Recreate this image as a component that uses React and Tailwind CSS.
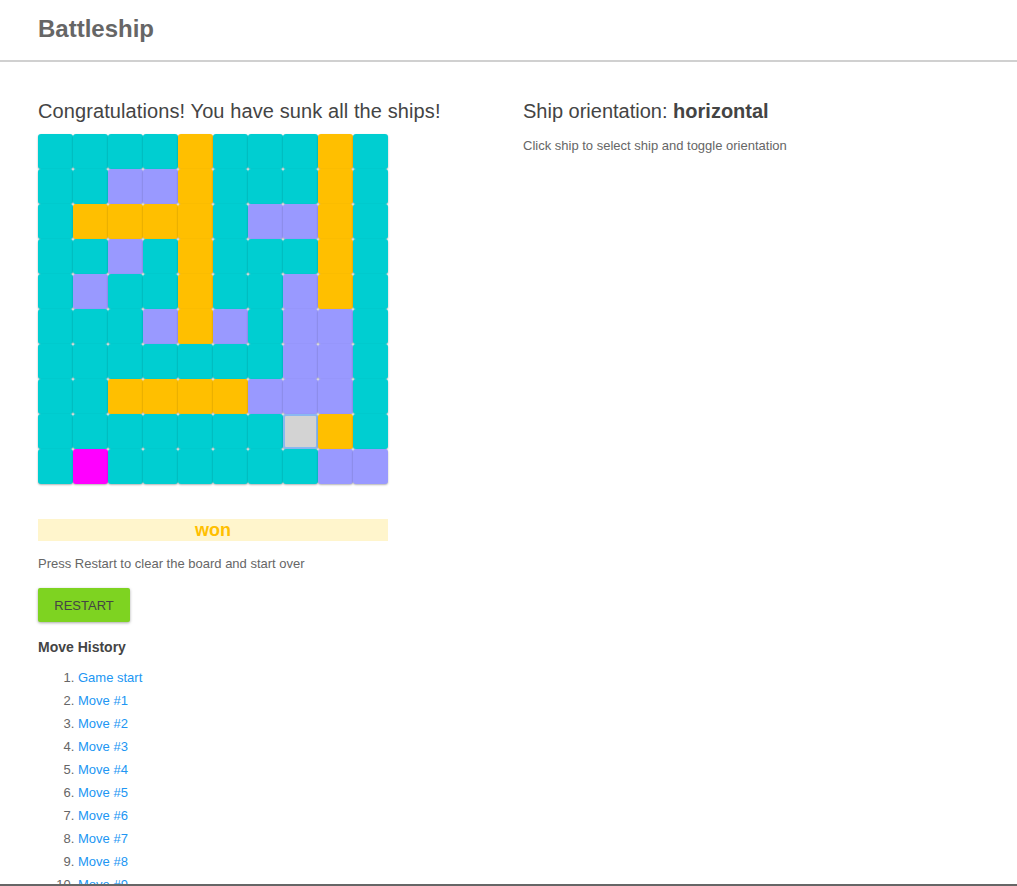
import React from 'react';

// board colors: C = water, Y = sunk ship, P = hit, M = last shot, G = selected
const BOARD = [
  'CCCCYCCCYC',
  'CCPPYCCCYC',
  'CYYYYCPPYC',
  'CCPCYCCCYC',
  'CPCCYCCPYC',
  'CCCPYPCPPC',
  'CCCCCCCPPC',
  'CCYYYYPPPC',
  'CCCCCCCGYC',
  'CMCCCCCCPP',
];

const cellClass = {
  C: 'bg-[#00ced1]',
  Y: 'bg-[#ffbf00]',
  P: 'bg-[#9999ff]',
  M: 'bg-[#ff00ff]',
  G: 'bg-[#d3d3d3] border-2 border-[#8ab8f0]',
};

const moves = ['Game start', 'Move #1', 'Move #2', 'Move #3', 'Move #4', 'Move #5', 'Move #6', 'Move #7', 'Move #8', 'Move #9', 'Move #10'];

const App = () => {
  return (
    <div className="min-h-screen bg-white text-[#444]" style={{ fontFamily: '"Liberation Sans", Arial, sans-serif' }}>
      <header className="h-[62px] border-b-2 border-[#d0d0d0] px-[38px] pt-[14px]">
        <h1 className="text-[24px] font-bold text-[#666] leading-[30px]">Battleship</h1>
      </header>

      <div className="flex px-[38px] pt-[37px]">
        <div className="w-[485px] shrink-0">
          <h2 className="text-[20px] leading-[24px] text-[#444] tracking-[0.1px]">Congratulations! You have sunk all the ships!</h2>

          <div className="mt-[11px] grid grid-cols-[repeat(10,35px)] w-[350px]">
            {BOARD.map((row, r) =>
              row.split('').map((c, i) => (
                <div
                  key={`${r}-${i}`}
                  className={`h-[35px] w-[35px] rounded-[3px] shadow-[0_1px_2px_rgba(0,0,0,0.3)] ${cellClass[c]}`}
                />
              ))
            )}
          </div>

          <div className="mt-[35px] w-[350px] h-[22px] bg-[#fff5cc] text-center text-[18px] font-bold leading-[22px] text-[#ffbf00]">
            won
          </div>

          <p className="mt-[15px] text-[13px] text-[#666] leading-[16px]">Press Restart to clear the board and start over</p>

          <button className="mt-[16px] h-[34px] w-[92px] rounded-[2px] bg-[#7ed321] pt-[2px] text-[13px] text-[#444] shadow-[0_1px_3px_rgba(0,0,0,0.35)]">
            RESTART
          </button>

          <h3 className="mt-[15px] text-[14px] font-bold leading-[20px] text-[#444]">Move History</h3>

          <ol className="mt-[13px] list-decimal pl-[40px] text-[13px] text-[#666]">
            {moves.map((m) => (
              <li key={m} className="h-[23px] leading-[16px]">
                <a href="#" className="text-[#2196f3]">{m}</a>
              </li>
            ))}
          </ol>
        </div>

        <div>
          <h2 className="text-[20px] leading-[24px] text-[#444]">
            Ship orientation: <span className="font-bold">horizontal</span>
          </h2>
          <p className="mt-[15px] text-[13px] text-[#666] leading-[16px]">Click ship to select ship and toggle orientation</p>
        </div>
      </div>

      <div className="fixed bottom-0 left-0 right-0 h-[2px] bg-[#666]" />
    </div>
  );
};

export default App;
